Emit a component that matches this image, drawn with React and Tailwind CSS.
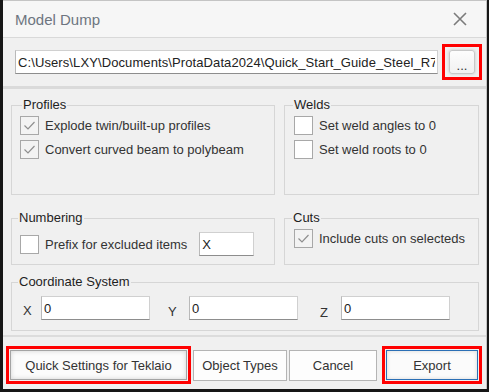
import React from 'react';

const Check = ({ checked }) => (
  <span
    className={
      'flex h-[19px] w-[19px] shrink-0 items-center justify-center border border-[#a8a8a8] ' +
      (checked ? 'bg-[#f3f3f3]' : 'bg-white')
    }
  >
    {checked && (
      <svg width="15" height="15" viewBox="0 0 15 15">
        <polyline points="2.5,7.5 6,11 12.5,4" fill="none" stroke="#8f8f8f" strokeWidth="1.2" />
      </svg>
    )}
  </span>
);

const CheckRow = ({ checked, label, className = '' }) => (
  <div className={'flex h-[24px] items-center gap-[6px] ' + className}>
    <Check checked={checked} />
    <span className="text-[#333]">{label}</span>
  </div>
);

const Field = ({ value, className = '' }) => (
  <input
    readOnly
    value={value}
    className={
      'h-[24px] border border-[#d0d0d0] border-b-[#8d8d8d] border-l-[#b9b9b9] bg-white px-[2px] text-[13px] text-[#222] outline-none ' +
      className
    }
  />
);

const Group = ({ title, legendClass, className = '', children }) => (
  <fieldset className={'border border-[#d6d6d6] ' + className}>
    <legend className={'px-[1px] text-[13px] leading-[16px] text-[#1e1e1e] ' + legendClass}>{title}</legend>
    {children}
  </fieldset>
);

const Button = ({ children, className = '' }) => (
  <button className={'flex items-center justify-center text-[13px] text-[#333] ' + className}>{children}</button>
);

export default function App() {
  return (
    <div className="flex h-[392px] w-[489px] bg-[#161616] font-['Liberation_Sans',Arial,sans-serif] text-[13px] leading-[15px]">
      <div className="mb-[3px] ml-[3px] mr-[2px] flex flex-1 flex-col border-r border-t border-[#c4c4c4] bg-[#f0f0f0]">
        {/* Title bar */}
        <div className="flex h-[37px] shrink-0 items-center justify-between border-b border-[#d9d9d9] bg-[#f6f6f6] pl-[12px] pr-[19px]">
          <span className="text-[15px] text-[#6d7580]">Model Dump</span>
          <svg width="14" height="14" viewBox="0 0 14 14">
            <path d="M1 1 L13 13 M13 1 L1 13" stroke="#7b7b7b" strokeWidth="1.6" />
          </svg>
        </div>

        {/* Path row */}
        <div className="flex h-[48px] shrink-0 items-center pl-[12px]">
          <Field
            value="C:\Users\LXY\Documents\ProtaData2024\Quick_Start_Guide_Steel_R7.ptp"
            className="h-[23px] w-[423px] tracking-[0.1px]"
          />
          <div className="ml-[4px] flex h-[36px] w-[40px] items-center justify-center border-[3px] border-[#ff0000]">
            <Button className="h-[24px] w-[26px] rounded-[3px] border border-[#c8c8c8] bg-gradient-to-b from-[#fdfdfd] to-[#f1f1f1] pt-[6px] shadow-[0_0_3px_rgba(0,0,0,0.18)]">
              ...
            </Button>
          </div>
        </div>
        <div className="h-[3px] shrink-0 bg-[#dadada]" />

        {/* Options */}
        <div className="pl-[8px] pt-[8px]">
          <div className="grid grid-cols-[264px_195px] gap-x-[9px] gap-y-[15px]">
            <Group title="Profiles" legendClass="ml-[10px]" className="h-[98px]">
              <div className="pl-[8px]">
                <CheckRow checked label="Explode twin/built-up profiles" />
                <CheckRow checked label="Convert curved beam to polybeam" />
              </div>
            </Group>
            <Group title="Welds" legendClass="ml-[8px]" className="h-[98px]">
              <div className="pl-[9px]">
                <CheckRow label="Set weld angles to 0" />
                <CheckRow label="Set weld roots to 0" />
              </div>
            </Group>
            <Group title="Numbering" legendClass="ml-[6px]" className="h-[55px]">
              <div className="flex items-center pl-[8px] pt-[6px]">
                <CheckRow label="Prefix for excluded items" />
                <Field value="X" className="ml-[12px] w-[55px]" />
              </div>
            </Group>
            <Group title="Cuts" legendClass="ml-[7px]" className="h-[55px]">
              <div className="pl-[9px]">
                <CheckRow checked label="Include cuts on selecteds" className="h-[22px] gap-[5px]" />
              </div>
            </Group>
          </div>

          <Group title="Coordinate System" legendClass="ml-[6px]" className="mt-[9px] h-[57px] w-[468px]">
            <div className="flex items-start pl-[11px] pt-[6px] text-[#333]">
              <span className="mt-[7px] w-[18px]">X</span>
              <Field value="0" className="w-[109px]" />
              <span className="ml-[18px] mt-[8px] w-[21px]">Y</span>
              <Field value="0" className="w-[109px]" />
              <span className="ml-[22px] mt-[9px] w-[21px]">Z</span>
              <Field value="0" className="w-[109px]" />
            </div>
          </Group>
        </div>

        {/* Footer buttons */}
        <div className="mt-[4px] flex flex-1 items-start border-t-2 border-[#dcdcdc] pl-[3px] pt-[9px]">
          <div className="flex h-[38px] w-[185px] border-[3px] border-[#ff0000] p-[1px]">
            <Button className="flex-1 border border-[#a3a3a3] bg-[#fbfbfb] shadow-[inset_0_0_5px_rgba(0,0,0,0.16)]">
              Quick Settings for Teklaio
            </Button>
          </div>
          <Button className="ml-[2px] mt-[4px] h-[31px] w-[94px] border border-[#b4b4b4] bg-[#fdfdfd]">
            Object Types
          </Button>
          <Button className="ml-[2px] mt-[4px] h-[31px] w-[88px] border border-[#b4b4b4] bg-[#fdfdfd]">
            Cancel
          </Button>
          <div className="ml-[5px] flex h-[38px] w-[100px] border-[3px] border-[#ff0000] p-[1px]">
            <Button className="flex-1 border border-[#2b6fb5] bg-[#fbfbfb] shadow-[inset_0_0_4px_rgba(0,0,0,0.14)]">
              Export
            </Button>
          </div>
        </div>
      </div>
    </div>
  );
}
